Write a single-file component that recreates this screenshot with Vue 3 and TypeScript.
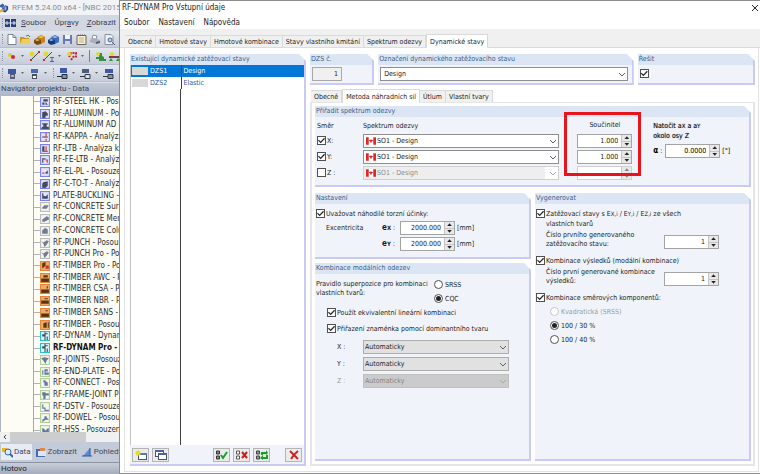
<script setup lang="ts">
import { reactive, ref } from 'vue'

type Family = 'steel' | 'concrete' | 'timber' | 'dynam' | 'joint'
interface Module { name: string; family: Family; glyph: string; accent?: string; bold?: boolean }

const bars = 'M2 3h5v1H2z M3 4h3v2H3z M2 6h6v2H1z'
const modules: Module[] = [
  { name: 'RF-STEEL HK - Posou', family: 'steel', glyph: 'M3 2h4v2H3z M2 5h2v2H2z M5 4l2 3h-2z' },
  { name: 'RF-ALUMINUM - Po', family: 'steel', glyph: 'M2 3l3-1 2 2v2H5v2H2z' },
  { name: 'RF-ALUMINUM AD', family: 'steel', glyph: bars },
  { name: 'RF-KAPPA - Analýza', family: 'steel', glyph: 'M2 4h5v1H2z', accent: 'M5 1h1v3H5z M5 6h1v2H5z' },
  { name: 'RF-LTB - Analýza kl', family: 'steel', glyph: 'M2 2h2v4h3v1H2z', accent: 'M5 2h1v4H5z' },
  { name: 'RF-FE-LTB - Analýz', family: 'steel', glyph: 'M2 3h3v1H3v3H2z', accent: 'M5 4h2v3H6V5H5z' },
  { name: 'RF-EL-PL - Posouze', family: 'steel', glyph: 'M5 5l2-2v3H5z', accent: 'M2 5h2v1H2z' },
  { name: 'RF-C-TO-T - Analýz', family: 'steel', glyph: 'M3 3l4-1v4L5 8H2V4z' },
  { name: 'PLATE-BUCKLING -', family: 'steel', glyph: 'M2 2h1v5h4V3L5 5 3 4v3H2z' },
  { name: 'RF-CONCRETE Surf', family: 'concrete', glyph: 'M2 5l2-2h4L6 6H2z' },
  { name: 'RF-CONCRETE Mer', family: 'concrete', glyph: 'M2 5l4-3 2 1v2L4 7H2z' },
  { name: 'RF-CONCRETE Colu', family: 'concrete', glyph: 'M2 4l2-2h2v5H2z M6 3h1v4H6z' },
  { name: 'RF-PUNCH - Posou', family: 'concrete', glyph: 'M1 3l2 1 3-2 2 1-2 3-2 2-1-3z' },
  { name: 'RF-PUNCH Pro - Po', family: 'concrete', glyph: 'M1 3l2 1 3-2 2 1-2 3-2 2-1-3z' },
  { name: 'RF-TIMBER Pro - Po', family: 'timber', glyph: 'M2 2l3-1v3l-3 3z', accent: 'M5 4h3v3H5z' },
  { name: 'RF-TIMBER AWC - P', family: 'timber', glyph: 'M3 2h4v2H3z M1 5h8v3H1z' },
  { name: 'RF-TIMBER CSA - P', family: 'timber', glyph: 'M6 2h1v2H6z M1 5h8v3H1z' },
  { name: 'RF-TIMBER NBR - P', family: 'timber', glyph: 'M4 2h3v1H4z M1 4h7v3H1z' },
  { name: 'RF-TIMBER SANS -', family: 'timber', glyph: 'M5 2h2v1H5z M1 5h8v3H1z' },
  { name: 'RF-TIMBER - Posou', family: 'timber', glyph: 'M3 3l3-1v5H3z M7 2h1v5H7z' },
  { name: 'RF-DYNAM - Dynar', family: 'dynam', glyph: 'M2 3h2V1h1v7H4V5H2z M5 2h2v1H5z M6 5h1v3H6z' },
  { name: 'RF-DYNAM Pro - D', family: 'dynam', bold: true, glyph: 'M2 3h2V1h1v7H4V5H2z M5 2h2v1H5z M6 5h1v3H6z' },
  { name: 'RF-JOINTS - Posouz', family: 'joint', glyph: 'M1 3l3-1 4 1-2 2-1 3-2-3z' },
  { name: 'RF-END-PLATE - Po', family: 'joint', glyph: 'M2 3h1v4H2z M4 2h3v2H5v1h3v2H4z' },
  { name: 'RF-CONNECT - Pos', family: 'joint', glyph: 'M3 2h2v1l2 1v3H4V4H3z' },
  { name: 'RF-FRAME-JOINT P', family: 'joint', glyph: 'M2 2h3v1h3v2H5v3H3V5H2z' },
  { name: 'RF-DSTV - Posouze', family: 'joint', glyph: 'M2 2h1v3h2v2h3v1H4V6H2z' },
  { name: 'RF-DOWEL - Posou', family: 'joint', glyph: 'M4 3h2v1l2 2H5L2 8V6l2-1z' },
  { name: 'RF-HSS - Posouzen', family: 'joint', glyph: 'M2 3h1l2 2 2-2h1v4H2z' },
]

const mainTabs = ['Obecné', 'Hmotové stavy', 'Hmotové kombinace', 'Stavy vlastního kmitání', 'Spektrum odezvy', 'Dynamické stavy']
const activeMain = ref('Dynamické stavy')
const subTabs = ['Obecné', 'Metoda náhradních sil', 'Útlum', 'Vlastní tvary']
const activeSub = ref('Metoda náhradních sil')

const cases = [{ id: 'DZS1', name: 'Design' }, { id: 'DZS2', name: 'Elastic' }]
const selectedCase = ref('DZS1')

const directions = reactive([
  { axis: 'X:', on: true, factor: '1.000' },
  { axis: 'Y:', on: true, factor: '1.000' },
  { axis: 'Z :', on: false, factor: '' },
])
const offsets = reactive([
  { axis: 'X', value: '2000.000' },
  { axis: 'Y', value: '2000.000' },
])
const signs = [{ axis: 'X', off: false }, { axis: 'Y', off: false }, { axis: 'Z', off: true }]
const rule = ref('CQC')
const mix = ref('100 / 30 %')
const mixes = ['Kvadratická (SRSS)', '100 / 30 %', '100 / 40 %']
const angle = ref('0.0000')
const firstCase = ref('1')
const firstResult = ref('1')
const solve = ref(true)
const torsion = ref(true)
const linear = ref(true)
const sign = ref(true)
const genCases = ref(true)
const genResults = ref(true)
const genDirections = ref(true)
</script>

<template>
  <div class="desk">
    <aside class="rfem">
      <header class="app-title">
        <svg class="logo" viewBox="0 0 10 12"><path d="M0 3l3-2 2 2-2 3-3-1z" fill="#3b62a8" /><path d="M2 7l4-4 3 1v4l-3 3-4-1z" fill="#305090" /><path d="M0 8l4-1v3l-4 1z" fill="#e0b43c" /><path d="M5 5l2-1v4L5 9z" fill="#9cb8e4" /></svg>
        <span>RFEM 5.24.00 x64 - [NBC 2015 F</span>
      </header>
      <nav class="app-menu">
        <i class="grip"></i>
        <svg class="mdi" viewBox="0 0 11 8"><rect width="11" height="8" fill="#26407c" /><path d="M0 4h11M5.500 0v8M2 2v4M9 2v4" stroke="#dfe6f4" /></svg>
        <a href="#"><u>S</u>oubor</a><a href="#">Úpr<u>a</u>vy</a><a href="#"><u>Z</u>obrazit</a>
      </nav>
      <div class="bar">
        <i class="grip"></i>
        <svg viewBox="0 0 11 11"><path d="M2 .5h5l3 3v7H2z" fill="#fff" stroke="#7b8390" /><path d="M7 .5v3h3" fill="none" stroke="#7b8390" /></svg>
        <svg viewBox="0 0 11 11"><path d="M0 3h4l1 1h4v6H0z" fill="#c89a28" /><path d="M2 5h9l-2 5H0z" fill="#f2cd58" /><path d="M6 2q3-2 4 1" fill="none" stroke="#3c8a40" /></svg>
        <svg viewBox="0 0 11 11"><path d="M3 3l4-2 4 2v5l-4 2z" fill="#c98418" /><path d="M0 6l3-2 4 2v4l-4 1-3-2z" fill="#7a4c10" /><path d="M1 6l2-1 3 1-3 1z M4 3l3-1 3 1-3 1z" fill="#f4c468" /></svg>
        <svg viewBox="0 0 11 11"><path d="M3 3l4-2 4 2v5l-4 2z" fill="#3c6cc0" /><path d="M0 6l3-2 4 2v4l-4 1-3-2z" fill="#183c78" /><path d="M1 6l2-1 3 1-3 1z M4 3l3-1 3 1-3 1z" fill="#9cc0f0" /></svg>
        <svg viewBox="0 0 11 11"><path d="M1 1h9v9H1z" fill="#6878b8" /><path d="M3 1h5v4H3z" fill="#f4f6ff" /><path d="M3 7h5v3H3z" fill="#d0d4e4" /></svg>
        <svg viewBox="0 0 11 11"><path d="M1 1.500h9v9H1z" fill="#f6ecd4" stroke="#70675a" /><path d="M2 1h7" stroke="#70675a" stroke-dasharray="1 1" /><path d="M3 4h5M3 6h5M3 8h5" stroke="#bdb39c" /></svg>
        <svg viewBox="0 0 11 11"><path d="M3 1l4 1-1 3H2z" fill="#fff" stroke="#8890a0" /><path d="M0 6l3-2 7 2v3l-4 1-6-2z" fill="#a8aebc" /><path d="M6 8l4-1v2L6 10z" fill="#586070" /></svg>
        <svg viewBox="0 0 11 11"><path d="M1 .5h6l2 2v8H1z" fill="#eef1f8" stroke="#8890a0" /><circle cx="6" cy="6" r="2" fill="#b8d4f4" stroke="#50607c" /><path d="M8 8l3 3" stroke="#50607c" /></svg>
      </div>
      <div class="bar">
        <i class="grip"></i>
        <svg viewBox="0 0 11 11"><circle cx="4" cy="4" r="2" fill="#d8d030" /><circle cx="7" cy="6" r="2" fill="#d02828" /></svg><i class="caret"></i>
        <svg viewBox="0 0 11 11"><path d="M2 9l7-7" stroke="#444" /><circle cx="3" cy="3" r="2.500" fill="#e0d834" /><path d="M1 8h2v2H1zM9 0h2v2H9z" fill="#c82828" /></svg>
        <svg viewBox="0 0 11 11"><path d="M1 9l8-8" stroke="#444" /><circle cx="3" cy="3" r="2.500" fill="#e0d834" /><path d="M0 8h2v2H0z" fill="#c82828" /><path d="M7 6.500h4M9 6v5M7 10.500h4" stroke="#3c68b8" /></svg><i class="caret"></i>
        <svg viewBox="0 0 11 11"><path d="M3 6l2-4h5v5M5 9l3-4" fill="none" stroke="#c82828" stroke-width="2" stroke-dasharray="2 1" /><circle cx="3" cy="3" r="2" fill="#e0d834" /></svg><i class="caret"></i>
        <i class="rule"></i>
        <svg viewBox="0 0 11 11"><path d="M4 2h3v3l2 1v2h2v2H4V8H1V6h3z" fill="#389038" /><circle cx="3" cy="3" r="2" fill="#e0d834" /></svg>
        <svg viewBox="0 0 11 11"><path d="M0 6h11" stroke="#7a3c3c" stroke-width="2" /><path d="M2 7l2 3H0zM9 7l2 3H7z" fill="#389038" /><circle cx="3" cy="3" r="2" fill="#e0d834" /></svg>
      </div>
      <div class="bar">
        <i class="grip"></i>
        <svg viewBox="0 0 11 11"><path d="M2 1h8v5H2z" fill="#3c58a8" /><path d="M4 6h5v5H4z" fill="#586074" /><path d="M5 8h3" stroke="#fff" /></svg><i class="caret"></i>
        <svg viewBox="0 0 11 11"><path d="M2 1h7v4H2z" fill="#4c68b0" /><path d="M3 6h5v5H3z" fill="#484e5c" /><path d="M4 8h3v2H4z" fill="#fff" /></svg><i class="caret"></i>
        <i class="grip"></i>
        <svg viewBox="0 0 11 11"><path d="M3 0h7v5H3z" fill="#3c58a8" /><path d="M0 8.500h5M5 6.500h5v4H5z" stroke="#202838" fill="#8890a0" /></svg><i class="caret"></i>
        <svg viewBox="0 0 11 11"><path d="M2 1h7v4H2z" fill="#4c5c80" /><path d="M0 8.500h5M5 6.500h5v4H5z" stroke="#303848" fill="#dce0ea" /></svg><i class="caret"></i>
        <svg viewBox="0 0 11 11"><path d="M2 1h8v4H2z" fill="#3c58a8" /><path d="M0 8.500h5M5 6.500h5v4H5z" stroke="#303848" fill="#8890a0" /></svg>
      </div>
      <h2 class="nav-head">Navigátor projektu - Data</h2>
      <div class="tree-view">
        <ul class="tree">
          <li v-for="m in modules" :key="m.name">
            <svg class="mod" :class="m.family" viewBox="0 0 9 9">
              <path class="glyph" :d="m.glyph" />
              <path v-if="m.accent" :d="m.accent" fill="#d03030" />
              <rect class="frame" x=".5" y=".5" width="8" height="8" />
            </svg>
            <span :class="{ strong: m.bold }">{{ m.name }}</span>
          </li>
        </ul>
      </div>
      <div class="hscroll">
        <svg viewBox="0 0 10 10"><path d="M6 3L4 5l2 2" fill="none" stroke="#444" /></svg>
        <i></i>
      </div>
      <div class="nav-tabs">
        <button type="button" class="on"><svg viewBox="0 0 11 11"><path d="M0 1h5v4H0z" fill="#e4b82c" /><circle cx="6" cy="5" r="3" fill="#dcecff" stroke="#3064a8" /><path d="M8 7l3 3" stroke="#3064a8" stroke-width="2" /></svg>Data</button>
        <button type="button"><svg viewBox="0 0 11 11"><path d="M0 2h9v8H0z" fill="#486cb0" /><path d="M2 4h8v5H2z" fill="#dce6f6" /><path d="M4 1h5v3H4z" fill="#d88c4c" /></svg>Zobrazit</button>
        <button type="button"><svg viewBox="0 0 11 11"><path d="M1 9l7-8v8z" fill="#5c8cd4" /><path d="M0 9h10M8 1v8" stroke="#2c54a0" /></svg>Pohledy</button>
      </div>
      <footer class="status">Hotovo</footer>
    </aside>

    <main class="dialog">
      <header class="dlg-title">
        <h1>RF-DYNAM Pro Vstupní údaje</h1>
        <button type="button" class="close" aria-label="Zavřít"><svg viewBox="0 0 8 8"><path d="M1 1l6 6M7 1L1 7" stroke="#222" /></svg></button>
      </header>
      <nav class="dlg-menu"><a href="#">Soubor</a><a href="#">Nastavení</a><a href="#">Nápověda</a></nav>
      <div class="tabs main-tabs" role="tablist">
        <button v-for="t in mainTabs" :key="t" type="button" role="tab" :class="{ on: t === activeMain }" @click="activeMain = t">{{ t }}</button>
      </div>

      <div class="page">
        <section class="group cases">
          <h3>Existující dynamické zatěžovací stavy</h3>
          <div class="case-list">
            <table>
              <tbody>
                <tr v-for="c in cases" :key="c.id" :class="{ on: c.id === selectedCase }" @click="selectedCase = c.id">
                  <th scope="row"><i class="swatch"></i>{{ c.id }}</th>
                  <td>{{ c.name }}</td>
                </tr>
              </tbody>
            </table>
            <div class="blank"></div>
          </div>
          <div class="tools">
            <button type="button" aria-label="Nový"><svg viewBox="0 0 12 10"><rect x="3.500" y="3.500" width="8" height="6" fill="#fff" stroke="#4a5468" /><path d="M3 4h9" stroke="#5878b0" stroke-width="2" /><circle cx="3" cy="3" r="2.500" fill="#e6dc28" /></svg></button>
            <button type="button" aria-label="Kopírovat"><svg viewBox="0 0 12 10"><rect x=".5" y=".5" width="8" height="6" fill="#fff" stroke="#4a5468" /><path d="M0 1h9" stroke="#486498" stroke-width="2" /><rect x="3.500" y="3.500" width="8" height="6" fill="#fff" stroke="#4a5468" /><path d="M3 4h9" stroke="#486498" stroke-width="2" /></svg></button>
            <i class="space"></i>
            <button type="button" aria-label="Vybrat vše"><svg viewBox="0 0 12 10"><path d="M.5 1h3v3h-3zM.5 6h3v3h-3z" fill="#888" stroke="#333" /><path d="M5 5l2 3 4-6" fill="none" stroke="#16a028" stroke-width="2" /></svg></button>
            <button type="button" aria-label="Zrušit výběr"><svg viewBox="0 0 12 10"><path d="M.5 1h3v3h-3zM.5 6h3v3h-3z" fill="#fff" stroke="#555" /><path d="M6 2l5 6M11 2L6 8" stroke="#c82020" stroke-width="2" /></svg></button>
            <button type="button" aria-label="Obrátit výběr"><svg viewBox="0 0 12 10"><path d="M.5 1h3v3h-3zM.5 6h3v3h-3z" fill="#999" stroke="#444" /><path d="M6 5V3h5M11 5v3H6" fill="none" stroke="#16a028" stroke-width="2" /><path d="M10 0l2 3-2 2zM7 5L4 8l3 2z" fill="#16a028" /></svg></button>
            <i class="space short"></i>
            <button type="button" aria-label="Smazat"><svg viewBox="0 0 12 10"><path d="M2 1q3 3 8 8M10 1Q6 4 3 9" fill="none" stroke="#c82424" stroke-width="2" /></svg></button>
          </div>
        </section>

        <div class="detail">
          <div class="head">
            <section class="group">
              <h3><label for="no">DZS č.</label></h3>
              <div class="one"><input id="no" class="box number" value="1" readonly /></div>
            </section>
            <section class="group">
              <h3><label for="title">Označení dynamického zatěžovacího stavu</label></h3>
              <div class="one"><div class="combo"><select id="title"><option>Design</option></select><svg viewBox="0 0 8 8"><path d="M1 3l3 3 3-3" /></svg></div></div>
            </section>
            <section class="group">
              <h3><label for="solve">Řešit</label></h3>
              <div class="one"><input id="solve" v-model="solve" type="checkbox" /></div>
            </section>
          </div>

          <div class="tabs sub-tabs" role="tablist">
            <button v-for="t in subTabs" :key="t" type="button" role="tab" :class="{ on: t === activeSub }" @click="activeSub = t">{{ t }}</button>
          </div>
          <div class="sheet">
            <section class="group wide">
              <h3>Přiřadit spektrum odezvy</h3>
              <div class="spectrum">
                <div class="dirs">
                  <span>Směr</span><span>Spektrum odezvy</span>
                  <template v-for="(d, i) in directions" :key="d.axis">
                    <label class="check"><input v-model="d.on" type="checkbox" />{{ d.axis }}</label>
                    <div class="combo flagged" :class="{ pale: i === 2 }">
                      <select :aria-label="'Spektrum odezvy ' + d.axis" :disabled="i === 2"><option>SO1 - Design</option></select>
                      <svg class="flag" viewBox="0 0 11 8"><rect width="11" height="8" fill="#fff" /><path d="M0 0h3v8H0zM8 0h3v8H8z" fill="#e02828" /><path d="M5 2h1v1h2L6 5v1H5V5L3 3h2z" fill="#e02828" /></svg>
                      <svg viewBox="0 0 8 8"><path d="M1 3l3 3 3-3" /></svg>
                    </div>
                  </template>
                </div>
                <div class="factors">
                  <span>Součinitel</span>
                  <div v-for="(d, i) in directions" :key="d.axis" class="spin" :class="{ pale: i === 2 }">
                    <input v-model="d.factor" :aria-label="'Součinitel ' + d.axis" :disabled="i === 2" />
                    <span class="arrows"><button type="button" aria-label="Více"></button><button type="button" aria-label="Méně"></button></span>
                  </div>
                  <i class="highlight"></i>
                </div>
                <div class="rotate">
                  <p>Natočit a<small>X</small> a a<small>Y</small><br />okolo osy Z</p>
                  <div class="line">
                    <label for="alpha"><b>α</b> :</label>
                    <div class="spin"><input id="alpha" v-model="angle" /><span class="arrows"><button type="button" aria-label="Více"></button><button type="button" aria-label="Méně"></button></span></div>
                    <span>[°]</span>
                  </div>
                </div>
              </div>
            </section>

            <div class="halves">
              <div class="stack">
                <section class="group settings">
                  <h3>Nastavení</h3>
                  <label class="check"><input v-model="torsion" type="checkbox" />Uvažovat náhodilé torzní účinky:</label>
                  <div class="ecc">
                    <template v-for="(o, i) in offsets" :key="o.axis">
                      <span>{{ i === 0 ? 'Excentricita' : '' }}</span>
                      <label :for="'e' + o.axis"><b>e<small>{{ o.axis }}</small></b> :</label>
                      <div class="spin"><input :id="'e' + o.axis" v-model="o.value" /><span class="arrows"><button type="button" aria-label="Více"></button><button type="button" aria-label="Méně"></button></span></div>
                      <span>[mm]</span>
                    </template>
                  </div>
                </section>
                <section class="group combine">
                  <h3>Kombinace modálních odezev</h3>
                  <div class="ruleset">
                    <p>Pravidlo superpozice pro kombinaci<br />vlastních tvarů:</p>
                    <div>
                      <label class="check"><input v-model="rule" type="radio" value="SRSS" />SRSS</label>
                      <label class="check"><input v-model="rule" type="radio" value="CQC" />CQC</label>
                    </div>
                  </div>
                  <div class="opts">
                    <label class="check"><input v-model="linear" type="checkbox" />Použít ekvivalentní lineární kombinaci</label>
                    <label class="check"><input v-model="sign" type="checkbox" />Přiřazení znaménka pomocí dominantního tvaru</label>
                  </div>
                  <div class="signs">
                    <template v-for="s in signs" :key="s.axis">
                      <label :for="'s' + s.axis" :class="{ dim: s.off }">{{ s.axis }} :</label>
                      <div class="combo grey" :class="{ off: s.off }"><select :id="'s' + s.axis" :disabled="s.off"><option>Automaticky</option></select><svg viewBox="0 0 8 8"><path d="M1 3l3 3 3-3" /></svg></div>
                    </template>
                  </div>
                </section>
              </div>

              <section class="group generate">
                <h3>Vygenerovat</h3>
                <label class="check"><input v-model="genCases" type="checkbox" /><span>Zatěžovací stavy s E<small>X,i</small> / E<small>Y,i</small> / E<small>Z,i</small> ze všech<br />vlastních tvarů</span></label>
                <div class="numbered">
                  <label for="first-case">Číslo prvního generovaného<br />zatěžovacího stavu:</label>
                  <div class="spin"><input id="first-case" v-model="firstCase" /><span class="arrows"><button type="button" aria-label="Více"></button><button type="button" aria-label="Méně"></button></span></div>
                </div>
                <label class="check"><input v-model="genResults" type="checkbox" />Kombinace výsledků (modální kombinace)</label>
                <div class="numbered">
                  <label for="first-result">Číslo první generované kombinace<br />výsledků:</label>
                  <div class="spin"><input id="first-result" v-model="firstResult" /><span class="arrows"><button type="button" aria-label="Více"></button><button type="button" aria-label="Méně"></button></span></div>
                </div>
                <label class="check"><input v-model="genDirections" type="checkbox" />Kombinace směrových komponentů:</label>
                <div class="mixes">
                  <label v-for="(m, i) in mixes" :key="m" class="check" :class="{ dim: i === 0 }"><input v-model="mix" type="radio" :value="m" :disabled="i === 0" />{{ m }}</label>
                </div>
              </section>
            </div>
          </div>
        </div>
      </div>
    </main>
  </div>
</template>

<style>
body { background: #fff; overflow: hidden; }
</style>

<style scoped>
* { box-sizing: border-box; }
.desk { display: flex; width: 100%; height: 100vh; min-height: 474px; overflow: hidden; font: 7px/10px "DejaVu Sans Condensed", "DejaVu Sans", sans-serif; color: #1c1c1c; }
h1, h2, h3, p, ul { margin: 0; padding: 0; font-size: inherit; font-weight: 400; }
a { color: inherit; text-decoration: none; }
button, input, select { margin: 0; padding: 0; font: inherit; color: inherit; border: 0; border-radius: 0; }
svg { display: block; flex: none; }

/* project window */
.rfem { display: flex; flex-direction: column; flex: 0 0 119px; overflow: hidden; white-space: nowrap; background: #d3d8e2; font-family: Roboto, "Noto Sans", sans-serif; font-size: 8px; }
.app-title { display: flex; align-items: center; gap: 3px; height: 15px; background: #f2f3f6; color: #8c8c8c; }
.logo { width: 9px; height: 12px; }
.app-menu { display: flex; align-items: center; height: 16px; padding-left: 1px; color: #3c4250; background: #d3d7e1; }
.app-menu a { margin-right: 8px; }
.mdi { width: 11px; height: 8px; margin: 0 5px 0 0; }
.grip { flex: none; width: 1px; height: 10px; margin: 0 2px 0 1px; border-left: 1px dotted #8a92a4; }
.bar { display: flex; align-items: center; gap: 3px; height: 17px; padding-left: 1px; background: linear-gradient(#e2e6ee, #c6ccd9); border-bottom: 1px solid #b6bdcc; }
.bar svg { width: 11px; height: 11px; }
.bar .grip { margin-right: 0; }
.caret { flex: none; width: 3px; height: 2px; margin: 0 2px 0 1px; background: #606878; clip-path: polygon(0 0, 100% 0, 50% 100%); }
.rule { flex: none; width: 1px; height: 12px; margin-right: 2px; background: #c06060; }
.nav-head { height: 14px; padding-left: 1px; line-height: 12px; color: #3e4656; background: linear-gradient(#c2c9d7, #aeb7c9); border-top: 1px solid #dde1e9; }
.tree-view { flex: 1; min-height: 0; overflow: hidden; background: #fdfdf6; border-left: 1px solid #b0b6c2; }
.tree { display: grid; grid-auto-rows: 1fr; height: calc(100% + 4px); margin-left: 32px; list-style: none; border-left: 1px solid #a8a8a8; font-family: "DejaVu Sans Condensed", "DejaVu Sans", sans-serif; }
.tree li { display: flex; align-items: center; min-height: 0; }
.tree li::before { content: ""; width: 6px; height: 1px; background: #b4b4b4; }
.mod { width: 10px; height: 10px; margin-right: 3px; }
.frame { fill: none; stroke: currentColor; }
.glyph { fill: #424a60; }
.steel { color: #7c80f0; background: #e2e4fa; }
.concrete { color: #bcbcbc; background: #f4f4f4; }
.concrete .glyph { fill: #747c8c; }
.timber { color: #e8853c; background: #eeac68; }
.timber .glyph { fill: #5a3410; }
.dynam { color: #20c4cc; background: #e4f8fa; }
.joint { color: #b0cf94; background: #f2f7ec; }
.joint .glyph { fill: #68789c; }
.tree span { color: #2c2c2c; }
.tree .strong { font-weight: 700; color: #111; }
.hscroll { display: flex; height: 10px; background: #f0f0f0; }
.hscroll svg { width: 10px; height: 10px; }
.hscroll i { width: 76px; background: #cdcdcd; }
.nav-tabs { display: flex; align-items: center; height: 20px; padding-left: 1px; background: #c3cad8; }
.nav-tabs button { display: flex; align-items: center; gap: 1px; height: 16px; padding: 0 1px; margin-right: 3px; background: none; color: #414a5c; }
.nav-tabs .on { background: #e9ecf2; }
.nav-tabs svg { width: 11px; height: 11px; }
.status { height: 12px; padding-left: 1px; line-height: 11px; background: linear-gradient(#c8ced9, #a4acbb); border-top: 1px solid #8b93a3; }

/* dialog window */
.dialog { display: flex; flex-direction: column; flex: 1; min-width: 0; background: #fff; border: 1px solid #8c8c8c; border-right: 0; }
.dlg-title, .dlg-menu { font-size: 8px; }
.dlg-title { display: flex; align-items: center; justify-content: space-between; height: 14px; padding: 0 1px 0 2px; }
.dlg-menu { display: flex; gap: 9px; height: 14px; padding-left: 4px; line-height: 16px; }
.close { width: 8px; height: 8px; background: none; }
.close svg { width: 8px; height: 8px; }
.tabs { display: flex; align-items: flex-end; }
.tabs button { height: 12px; padding: 0 3px; background: #f0f0f0; border: solid #dadada; border-width: 1px 1px 0 0; white-space: nowrap; }
.tabs .on { height: 14px; margin-bottom: -1px; background: #fff; border-left-width: 1px; position: relative; }
.main-tabs { height: 19px; padding-left: 5px; background: #f0f0f0; border-bottom: 1px solid #dcdcdc; }
.page { display: grid; grid-template-columns: minmax(0, 176fr) minmax(0, 445fr); gap: 4px; flex: 1; min-height: 0; margin: 0 1px 1px 4px; padding: 6px 3px 5px 5px; border: solid #e2e2e2; border-width: 0 1px 1px; }

.group { display: flex; flex-direction: column; min-width: 0; background: #f0f4fa; border: solid #c9cbf6; border-width: 0 2px 2px 0; clip-path: polygon(0 0, calc(100% - 7px) 0, 100% 7px, 100% 100%, 0 100%); }
.group h3 { flex: none; height: 11px; padding-left: 1px; line-height: 11px; color: #345f8c; background: #dbe5f4; white-space: nowrap; }

.case-list { display: flex; flex-direction: column; flex: 1; background: #fff; border-left: 1px solid #c4c4c4; }
table { width: 100%; border-collapse: collapse; table-layout: fixed; color: #3050a8; }
tr { height: 12px; }
th, td { padding: 0 0 0 2px; font-weight: 400; text-align: left; }
th { width: 50px; padding: 0 0 0 1px; border-right: 1px solid #404040; }
.on th, .on td { background: #0078d7; color: #fff; }
.swatch { display: inline-block; width: 16px; height: 8px; margin-right: 2px; vertical-align: middle; background: #d8d8d8; }
.blank { flex: 1; width: 50px; border-right: 1px solid #404040; }
.tools { display: flex; align-items: center; gap: 3px; height: 19px; padding: 0 2px; }
.tools button { display: grid; place-items: center; width: 17px; height: 14px; background: #ebebeb; border: 1px solid #b4b4b4; }
.tools svg { width: 12px; height: 10px; }
.space { flex: 44; }
.short { flex: 10; }

.detail { display: flex; flex-direction: column; min-width: 0; min-height: 0; }
.head { display: grid; grid-template-columns: 64fr 255fr 117fr; gap: 4px; }
.one { padding: 2px 4px 2px 2px; }
.box { display: block; width: 30px; height: 14px; padding-right: 3px; text-align: right; background: #f0f0f0; border: 1px solid #a8a8a8; }
.one > input[type="checkbox"] { margin: 2px 0 3px; }

.combo { position: relative; min-width: 0; height: 14px; }
.combo select { display: block; width: 100%; height: 100%; padding-left: 3px; appearance: none; background: #fff; border: 1px solid #8e8e8e; opacity: 1; }
.combo svg { position: absolute; top: 3px; right: 2px; width: 8px; height: 8px; fill: none; stroke: #606060; pointer-events: none; }
.combo svg.flag { left: 3px; width: 10px; height: 8px; stroke: none; }
.flagged select { padding-left: 13px; }
.grey select { padding-left: 1px; background: #e1e1e1; border-color: #adadad; }
.combo.pale select { background: linear-gradient(to left, #fff 13px, #eee 13px); border-color: #cfcfcf; color: #8c8c8c; }
.combo.off select { background: #cbcbcb; border-color: #c0c0c0; color: #858585; }
.combo.pale svg:not(.flag), .combo.off svg { stroke: #a8a8a8; }

.check { display: flex; align-items: flex-start; gap: 1px; white-space: nowrap; }
input[type="checkbox"], input[type="radio"] { flex: none; display: grid; place-items: center; width: 9px; height: 9px; appearance: none; background: #fff; border: 1px solid #505050; }
input[type="radio"] { border-radius: 50%; margin-right: 1px; }
input[type="checkbox"]:checked::before { content: ""; width: 7px; height: 7px; background: #222; clip-path: polygon(0 50%, 12% 38%, 38% 64%, 88% 12%, 100% 24%, 38% 88%); }
input[type="radio"]:checked::before { content: ""; width: 5px; height: 5px; border-radius: 50%; background: #222; }
.dim { color: #9a9a9a; }
.dim input[type="radio"] { border-color: #c4c4c4; }
small { font-size: 6px; }
b { font-size: 8px; }

.spin { display: flex; width: 55px; height: 14px; border: 1px solid #a4a4a4; background: #fff; }
.spin input { flex: 1; min-width: 0; padding-right: 3px; text-align: right; background: none; }
.arrows { display: grid; width: 10px; background: #e8e8e8; border-left: 1px solid #c4c4c4; }
.arrows button { display: grid; place-items: center; background: none; }
.arrows button::before { content: ""; width: 5px; height: 3px; background: #222; clip-path: polygon(50% 0, 100% 100%, 0 100%); }
.arrows button + button { border-top: 1px solid #c4c4c4; }
.arrows button + button::before { clip-path: polygon(0 0, 100% 0, 50% 100%); }
.spin.pale { border-color: #d0d0d0; }
.spin.pale .arrows button::before { background: #888; }

.sub-tabs { height: 17px; padding-left: 1px; }
.sheet { display: flex; flex-direction: column; gap: 6px; flex: 1; min-height: 0; padding: 3px 2px 3px 3px; border: solid #e6e6e6; border-width: 1px 2px 2px; }
.spectrum { display: grid; grid-template-columns: 247fr 77fr 108fr; align-items: start; padding: 3px 1px 5px 2px; }
.dirs { display: grid; grid-template-columns: 46px 1fr; grid-template-rows: 12px; row-gap: 2px; align-items: center; padding-right: 4px; }
.factors { position: relative; display: grid; grid-template-rows: 12px; row-gap: 2px; justify-items: center; padding-left: 6px; }
.highlight { position: absolute; inset: -8px -1px 4px 1px; border: 3px solid #e8141c; pointer-events: none; }
.rotate { padding: 1px 0 0 13px; color: #000; }
.rotate p { white-space: nowrap; text-shadow: 0 0 1px #0006; }
.line { display: flex; align-items: center; gap: 2px; margin-top: 3px; }
.line label { width: 10px; white-space: nowrap; }

.halves { display: grid; grid-template-columns: 1fr 1fr; gap: 4px; flex: 1; min-height: 0; }
.stack { display: flex; flex-direction: column; gap: 4px; min-width: 0; }
.settings { padding-bottom: 6px; }
.settings > .check { padding: 5px 1px 2px; }
.ecc { display: grid; grid-template-columns: 54px 16px 55px 1fr; gap: 2px; align-items: center; padding-left: 11px; }
.combine { flex: 1; }
.ruleset { display: grid; grid-template-columns: 118px 1fr; padding: 6px 0 0 1px; }
.ruleset p { line-height: 9px; white-space: nowrap; }
.ruleset .check { height: 14px; }
.opts { display: grid; gap: 6px; padding: 0 0 0 12px; }
.signs { display: grid; grid-template-columns: 26px 146px; row-gap: 3px; align-items: center; padding: 6px 0 0 22px; }
.generate > .check { padding: 5px 1px 0; }
.numbered { display: flex; justify-content: space-between; align-items: flex-end; padding: 2px 30px 2px 11px; }
.numbered label { line-height: 9px; white-space: nowrap; }
.mixes { display: grid; gap: 4px; padding: 4px 0 0 15px; }
</style>
